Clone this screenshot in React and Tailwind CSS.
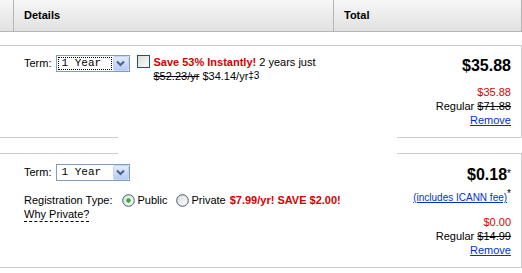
import React from 'react';

const Select = ({ focused }) => (
  <div className="flex h-[17px] w-[74px] shrink-0 border border-[#7f9db9] bg-white">
    <div className="flex flex-1 p-px">
      <span
        className={`flex flex-1 items-center pl-[3px] text-[11px] leading-none text-black ${
          focused ? 'border border-dotted border-black' : 'border border-transparent'
        }`}
        style={{ fontFamily: '"Liberation Mono", monospace' }}
      >
        1 Year
      </span>
    </div>
    <div className="flex w-[16px] items-center justify-center rounded-[2px] border border-[#c3d3fd] bg-gradient-to-b from-[#e3ebfd] to-[#b6cbf6]">
      <svg width="9" height="7" viewBox="0 0 9 7">
        <path d="M1 1.5 L4.5 5 L8 1.5" fill="none" stroke="#4d6185" strokeWidth="2" />
      </svg>
    </div>
  </div>
);

const Radio = ({ checked }) => (
  <svg width="13" height="13" viewBox="0 0 13 13" className="block shrink-0">
    <defs>
      <linearGradient id={checked ? 'rg1' : 'rg2'} x1="0" y1="0" x2="1" y2="1">
        <stop offset="0" stopColor="#dcdcd7" />
        <stop offset="1" stopColor="#ffffff" />
      </linearGradient>
    </defs>
    <circle cx="6.5" cy="6.5" r="5.8" fill={`url(#${checked ? 'rg1' : 'rg2'})`} stroke="#3d5a78" strokeWidth="1" />
    {checked && <circle cx="6.5" cy="6.5" r="2.2" fill="#2fb12f" />}
  </svg>
);

const Checkbox = () => (
  <div className="h-[13px] w-[13px] shrink-0 border border-[#1c5180] bg-gradient-to-br from-[#dcdcd7] to-[#fbfbf9]" />
);

export default function App() {
  return (
    <div
      className="relative h-[273px] w-[522px] overflow-hidden bg-white text-[11px] text-black"
      style={{ fontFamily: '"Liberation Sans", Arial, sans-serif' }}
    >
      {/* table header */}
      <div className="flex h-[32px] border-r border-b border-[#b5b5b5] bg-gradient-to-b from-[#f7f7f7] to-[#e1e1e1] font-bold">
        <div className="w-[14px] border-r border-[#b5b5b5]" />
        <div className="flex w-[320px] items-center border-r border-[#b5b5b5] pl-[10px]">Details</div>
        <div className="flex flex-1 items-center pl-[10px]">Total</div>
      </div>

      {/* domain item */}
      <div className="mt-[13px] flex h-[93px] border-t border-r border-b border-[#cccccc]">
        <div className="flex min-w-0 flex-1 items-start pt-[9px] pl-[24px] whitespace-nowrap">
          <div className="flex h-[17px] items-center gap-[4px]">
            <span>Term:</span>
            <Select focused />
          </div>
          <div className="ml-[7px]">
            <Checkbox />
          </div>
          <div className="ml-[4px] leading-[14px]">
            <div>
              <span className="font-bold text-[#d40000]">Save 53% Instantly!</span> 2 years just
            </div>
            <div>
              <span className="line-through">$52.23/yr</span> $34.14/yr
              <sup className="relative -top-[1px] text-[10px]">‡3</sup>
            </div>
          </div>
        </div>
        <div className="w-[188px] shrink-0 pt-[10px] pr-[10px] text-right">
          <div className="text-[16px] leading-[20px] font-bold">$35.88</div>
          <div className="mt-[9px] leading-[14px]">
            <div className="text-[#dd0000]">$35.88</div>
            <div>
              Regular <span className="line-through">$71.88</span>
            </div>
            <a href="#" className="text-[#0033cc] underline">Remove</a>
          </div>
        </div>
      </div>

      {/* privacy item */}
      <div className="mt-[15px] flex h-[115px] border-t border-r border-b border-[#cccccc]">
        <div className="min-w-0 flex-1 pt-[10px] pl-[24px] whitespace-nowrap">
          <div className="flex h-[17px] items-center gap-[4px]">
            <span>Term:</span>
            <Select />
          </div>
          <div className="mt-[12px] flex items-start leading-[14px]">
            <span className="shrink-0">Registration Type:</span>
            <span className="ml-[10px] shrink-0 pt-px">
              <Radio checked />
            </span>
            <span className="ml-[2px] shrink-0">Public</span>
            <span className="ml-[9px] shrink-0 pt-px">
              <Radio />
            </span>
            <span className="ml-[2px] shrink-0">Private</span>
            <span className="ml-[4px] shrink-0 font-bold text-[#d40000]">$7.99/yr! SAVE $2.00!</span>
          </div>
          <div className="-mt-[1px]">
            <span className="inline-block border-b border-dashed border-black leading-[13px]">Why Private?</span>
          </div>
        </div>
        <div className="w-[188px] shrink-0 pt-[11px] pr-[10px] text-right">
          <div className="text-[16px] leading-[20px] font-bold">
            $0.18<sup className="relative -top-[3px] text-[10px] font-normal">*</sup>
          </div>
          <div className="mt-[6px] text-[10px] leading-[14px]">
            <a href="#" className="text-[#0033cc] underline">(includes ICANN fee)</a>
            <sup className="relative -top-[4px] text-[10px]">*</sup>
          </div>
          <div className="mt-[10px] leading-[14px]">
            <div className="text-[#dd0000]">$0.00</div>
            <div>
              Regular <span className="line-through">$14.99</span>
            </div>
            <a href="#" className="text-[#0033cc] underline">Remove</a>
          </div>
        </div>
      </div>

      {/* blank patch lying over the card edges */}
      <div className="absolute top-[125px] left-[118px] h-[35px] w-[279px] bg-white" />
    </div>
  );
}
